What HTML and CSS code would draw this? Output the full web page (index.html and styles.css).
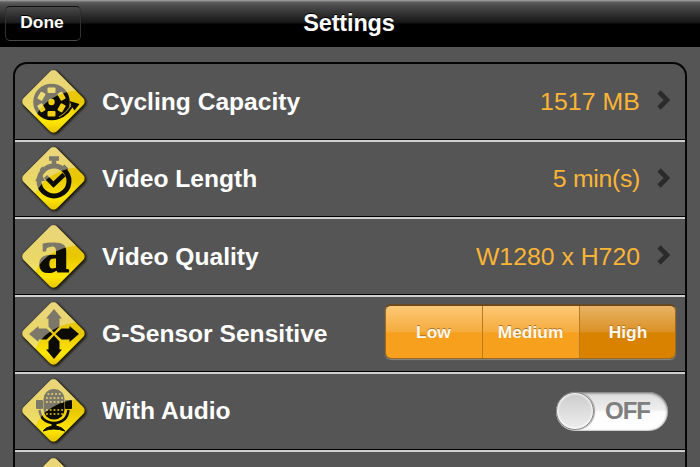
FILE: index.html
```html
<!DOCTYPE html>
<html lang="en">
<head>
<meta charset="utf-8">
<title>Settings</title>
<link rel="stylesheet" href="styles.css">
</head>
<body>
<svg class="defs" width="0" height="0">
  <defs>
    <linearGradient id="yellow" x1="0" y1="0" x2="1" y2="1">
      <stop offset="0" stop-color="#e9c52c"/><stop offset=".5" stop-color="#e8c800"/><stop offset=".8" stop-color="#ffe600"/><stop offset="1" stop-color="#e3c000"/>
    </linearGradient>
    <clipPath id="sign"><rect x="9" y="9" width="47" height="47" rx="5" transform="rotate(45 32.5 32.5)"/></clipPath>
    <filter id="soft" x="-20%" y="-20%" width="140%" height="140%"><feGaussianBlur stdDeviation=".8"/></filter>
    <g id="base">
      <rect x="9.3" y="9.3" width="48.5" height="48.5" rx="6" transform="rotate(45 33.5 33.5)" fill="#161200" filter="url(#soft)"/>
      <rect x="9" y="9" width="47" height="47" rx="5" transform="rotate(45 32.5 32.5)" fill="url(#yellow)"/>
    </g>
    <path id="gloss" clip-path="url(#sign)" d="M-2-2H66V20Q30 22 17 43L11 54L-2 40Z" fill="#ece5cf" fill-opacity=".5"/>
  </defs>
</svg>
<header class="bar">
  <button class="done">Done</button>
  <h1 class="title">Settings</h1>
</header>
<main class="panel">
  <section class="row">
    <svg class="icon" viewBox="0 0 66 66">
      <use href="#base"/>
      <circle cx="30.5" cy="33" r="18.3" fill="#0c0b02"/>
      <path d="M31 48Q42 48 50 36L48.5 32L58.5 35L53.5 41.5L51.5 38.5Q44 51 31 51Z" fill="#0c0b02"/>
      <g fill="#edcf16">
        <circle cx="30.5" cy="33" r="3.2"/>
        <g id="slots"><rect x="26.5" y="18.6" width="8" height="5.5" rx="1"/><rect x="26.5" y="41.9" width="8" height="5.5" rx="1"/></g>
        <use href="#slots" transform="rotate(60 30.5 33)"/><use href="#slots" transform="rotate(120 30.5 33)"/>
      </g>
      <path d="M38 48Q44 45 50 37" fill="none" stroke="#edcf16" stroke-width=".8"/>
      <use href="#gloss"/>
    </svg>
    <span class="label">Cycling Capacity</span><span class="value wide">1517 MB</span>
    <svg class="chevron" viewBox="0 0 14 20"><path d="M2 2L10 10L2 18"/></svg>
  </section>
  <section class="row">
    <svg class="icon" viewBox="0 0 66 66">
      <use href="#base"/>
      <g fill="none" stroke="#0c0b02">
        <circle cx="33" cy="35" r="15" stroke-width="5"/>
        <path d="M33 20V12M28 12.5H38" stroke-width="4.5"/>
        <path d="M20 22L24 26M42 20L46 24" stroke-width="4"/>
        <path d="M24.5 30.5L32.5 38.5L43 28.5" stroke-width="4.5"/>
      </g>
      <path d="M14 35L20 27L24 35Z" fill="#0c0b02"/>
      <use href="#gloss"/>
    </svg>
    <span class="label">Video Length</span><span class="value tight">5 min(s)</span>
    <svg class="chevron" viewBox="0 0 14 20"><path d="M2 2L10 10L2 18"/></svg>
  </section>
  <section class="row">
    <svg class="icon" viewBox="0 0 66 66">
      <use href="#base"/>
      <text class="glyph" transform="translate(32.5 47.5) scale(1.04 1)" text-anchor="middle">a</text>
      <use href="#gloss"/>
    </svg>
    <span class="label">Video Quality</span><span class="value">W1280 x H720</span>
    <svg class="chevron" viewBox="0 0 14 20"><path d="M2 2L10 10L2 18"/></svg>
  </section>
  <section class="row">
    <svg class="icon" viewBox="0 0 66 66">
      <use href="#base"/>
      <g fill="#0c0b02">
        <path id="arrow" d="M33 8L41 17.5H38.5V25.5L33 31.5L27.5 25.5V17.5H25Z"/>
        <use href="#arrow" transform="rotate(90 33 33)"/><use href="#arrow" transform="rotate(180 33 33)"/><use href="#arrow" transform="rotate(270 33 33)"/>
      </g>
      <use href="#gloss"/>
    </svg>
    <span class="label">G-Sensor Sensitive</span>
    <div class="segments">
      <button class="seg">Low</button><button class="seg">Medium</button><button class="seg on">High</button>
    </div>
  </section>
  <section class="row">
    <svg class="icon" viewBox="0 0 66 66">
      <use href="#base"/>
      <g fill="#0c0b02">
        <rect x="22.5" y="11" width="21" height="30.5" rx="10"/>
        <rect x="15" y="22" width="7" height="9" rx="1"/><rect x="44" y="22" width="7" height="9" rx="1"/>
        <path d="M22 53Q25 49 31 48V45H35V48Q41 49 44 53Q38 51 33 51T22 53Z" stroke="#0c0b02"/>
      </g>
      <path d="M18.5 32Q20 44.5 33 45Q46 44.5 47.5 32" fill="none" stroke="#0c0b02" stroke-width="2.4"/>
      <path d="M26.5 16H40M25 20H42M25 24H42M25 32H42M25 36H42" stroke="#edcf16" stroke-width="1.5" stroke-dasharray="1.8 2"/>
      <use href="#gloss"/>
    </svg>
    <span class="label">With Audio</span>
    <div class="switch"><span class="knob"></span><span class="off">OFF</span></div>
  </section>
  <section class="row">
    <svg class="icon" viewBox="0 0 66 66"><use href="#base"/><use href="#gloss"/></svg>
  </section>
</main>
</body>
</html>
```

FILE: styles.css
```css
* { box-sizing: border-box; }
body {
  margin: 0;
  height: 467px;
  overflow: hidden;
  background: #555;
  color: #fff;
  font-family: "Liberation Sans", Arial, sans-serif;
}
button { font: inherit; color: inherit; border: 0; margin: 0; padding: 0; }
.defs { position: absolute; }
.bar {
  display: grid;
  grid-template-columns: 76px 1fr 76px;
  align-items: center;
  height: 47px;
  padding: 0 5px;
  background: linear-gradient(#a0a0a0 0, #8a8a8a 1px, #606060 2px, #4d4d4d 5px, #151515 23px, #000 24px, #000 100%);
}
.done {
  width: 76px;
  height: 35px;
  border: 1px solid #303030;
  border-top-color: #101010;
  border-bottom-color: #484848;
  border-radius: 5px;
  background: linear-gradient(#494949, #1b1b1b 49%, #000 51%, #020202);
  font-size: 17.4px;
  font-weight: bold;
  line-height: 31px;
  padding: 0 2px 2px 0;
  text-shadow: 0 -1px #000;
}
.title {
  margin: 0 2px 0 0;
  font-size: 23.5px;
  letter-spacing: -.15px;
  line-height: 47px;
  text-align: center;
  text-shadow: 0 -1px #000;
}
.panel {
  width: 674px;
  height: 405px;
  margin: 15px 0 0 13px;
  border: 2px solid #060606;
  border-bottom: 0;
  border-radius: 14px 14px 0 0;
  overflow: hidden;
}
.row {
  display: flex;
  align-items: center;
  height: 77.4px;
  padding: 0 9px 0 6px;
  border-top: 2px solid #d0d0d0;
  border-bottom: 1px solid #000;
}
.row:first-child { height: 76px; border-top: 0; }
.row:last-child { height: 79px; margin-bottom: -60px; }
.icon { flex: none; width: 66px; height: 66px; overflow: visible; }
.label {
  margin-left: 15px;
  font-size: 24.6px;
  font-weight: bold;
  letter-spacing: 0;
  white-space: nowrap;
}
.value {
  margin-left: auto;
  margin-right: 17px;
  color: #fbb436;
  font-size: 24.8px;
  white-space: nowrap;
}
.value.wide { letter-spacing: .1px; }
.value.tight { letter-spacing: -.3px; }
.chevron {
  flex: none;
  width: 14px;
  height: 20px;
  margin: 0 5px 3px 0;
  fill: none;
  stroke: #2b2b2b;
  stroke-width: 4.6;
}
.glyph { font: bold 61px "Liberation Serif", serif; fill: #0c0b02; stroke: #0c0b02; stroke-width: 1.2; }
.segments {
  display: grid;
  grid-template-columns: 97px 97px 97px;
  width: 291px;
  height: 55px;
  margin: 0 0 4px auto;
  border-radius: 6px;
  overflow: hidden;
  border: 1px solid #9c6a1d;
  border-top: 2px solid #68481f;
  box-shadow: 0 1px 1px #888;
}
.seg {
  background: linear-gradient(#fdc877, #f6ac3e 49%, #f6a01e 52%, #f6a01e);
  border-right: 1px solid #b87920;
  padding-right: 1px;
  color: #fff8ea;
  font-size: 17.4px;
  font-weight: bold;
  text-shadow: 0 -1px #a87630;
}
.seg.on { background: linear-gradient(#e8b365, #dc9127 49%, #d88200 52%, #d88200); border-right: 0; }
.switch {
  display: flex;
  align-items: center;
  width: 112px;
  height: 39px;
  margin: 0 8px 0 auto;
  border-radius: 20px;
  background: linear-gradient(#dcdcdc, #eee 45%, #fcfcfc 52%, #fff);
  box-shadow: inset 0 1px 3px #666, inset 0 0 2px #999;
}
.knob {
  width: 38px;
  height: 38px;
  border: 1px solid #888;
  border-radius: 50%;
  background: linear-gradient(#ccc, #eee);
  box-shadow: inset 0 0 2px 1px #fff, 1px 0 1px #999;
}
.off { margin-left: 11px; color: #7f7f7f; font-size: 24px; font-weight: bold; letter-spacing: -1px; }
```
